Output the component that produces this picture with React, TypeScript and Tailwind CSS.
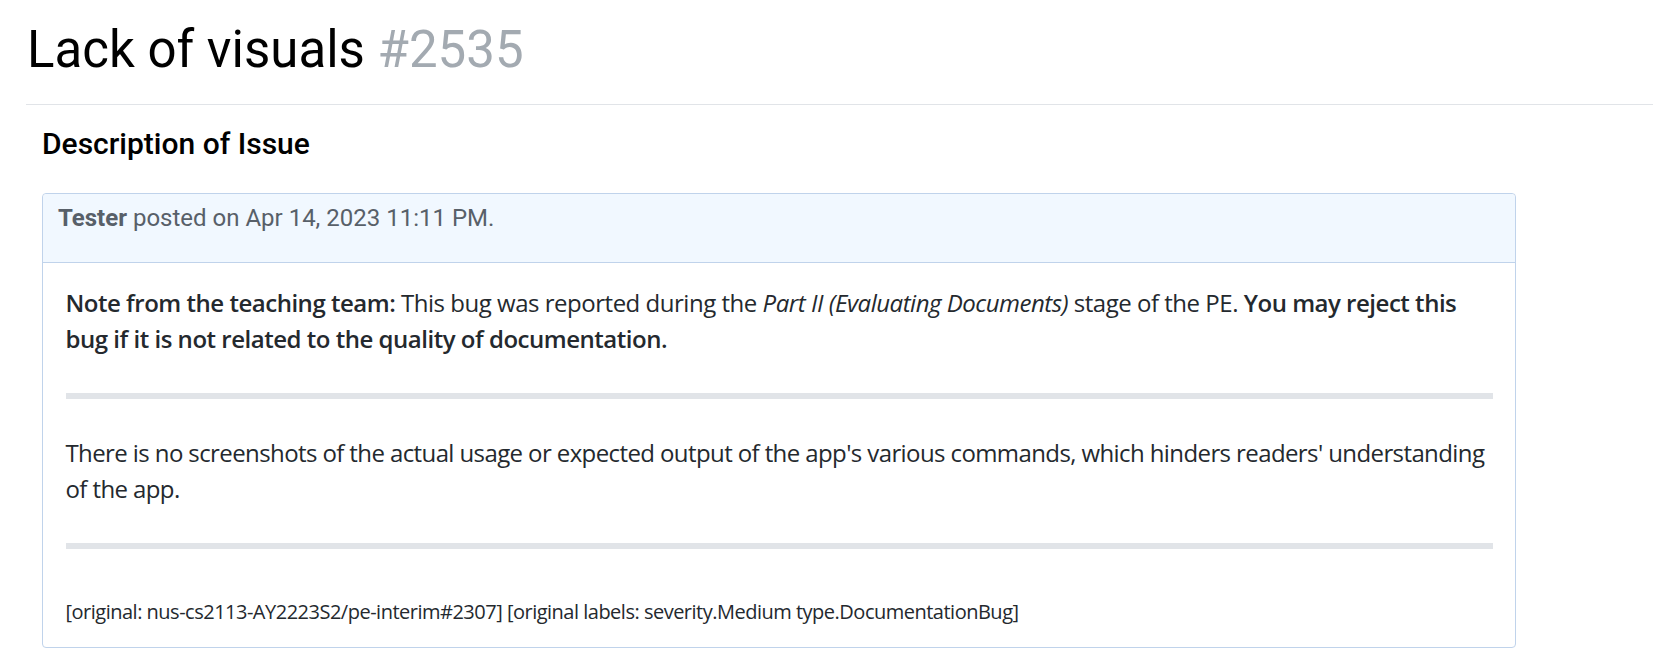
export default function App() {
  return (
    <div className="min-h-screen bg-white pl-[26px] pt-[19px] font-['Roboto',sans-serif]">
      {/* Title */}
      <h1 className="pl-[1px] text-[51px] leading-[62px] font-normal text-black">
        Lack of visuals <span className="text-[#a3aab1]">#2535</span>
      </h1>
      <div className="mt-[23px] border-b border-[#e1e4e8]" />

      <div className="w-[1490px] pl-[16px]">
        <h5 className="mt-[21px] text-[30px] leading-[36px] font-medium text-black">
          Description of Issue
        </h5>

        {/* Comment card */}
        <div className="mt-[31px] rounded-[4px] border border-[#c0d3eb]">
          <div className="rounded-t-[4px] border-b border-[#c0d3eb] bg-[#f1f8ff] px-[15px] pt-[6px] pb-[26px] text-[24px] leading-[36px] text-[#586069]">
            <span className="font-bold">Tester</span> posted on Apr 14, 2023 11:11 PM.
          </div>
          <div className="px-[22.5px] pt-[22px] pb-[21px] font-['Open_Sans',sans-serif] text-[#24292e]">
            <p className="text-[24px] leading-[36px] tracking-[-0.02em]">
              <strong className="font-semibold">Note from the teaching team:</strong> This bug was reported during
              the <em>Part II (Evaluating Documents)</em> stage of the PE.{" "}
              <strong className="font-semibold">
                You may reject this bug if it is not related to the quality of documentation.
              </strong>
            </p>
            <hr className="my-[36px] h-[6px] border-0 bg-[#e1e4e8]" />
            <p className="text-[24px] leading-[36px] tracking-[-0.025em]">
              There is no screenshots of the actual usage or expected output of the app's various commands, which
              hinders readers' understanding of the app.
            </p>
            <hr className="mt-[36px] h-[6px] border-0 bg-[#e1e4e8]" />
            <p className="mt-[48px] text-[20px] leading-[29px] tracking-[-0.025em]">
              [original: nus-cs2113-AY2223S2/pe-interim#2307] [original labels: severity.Medium
              type.DocumentationBug]
            </p>
          </div>
        </div>
      </div>
    </div>
  );
}
